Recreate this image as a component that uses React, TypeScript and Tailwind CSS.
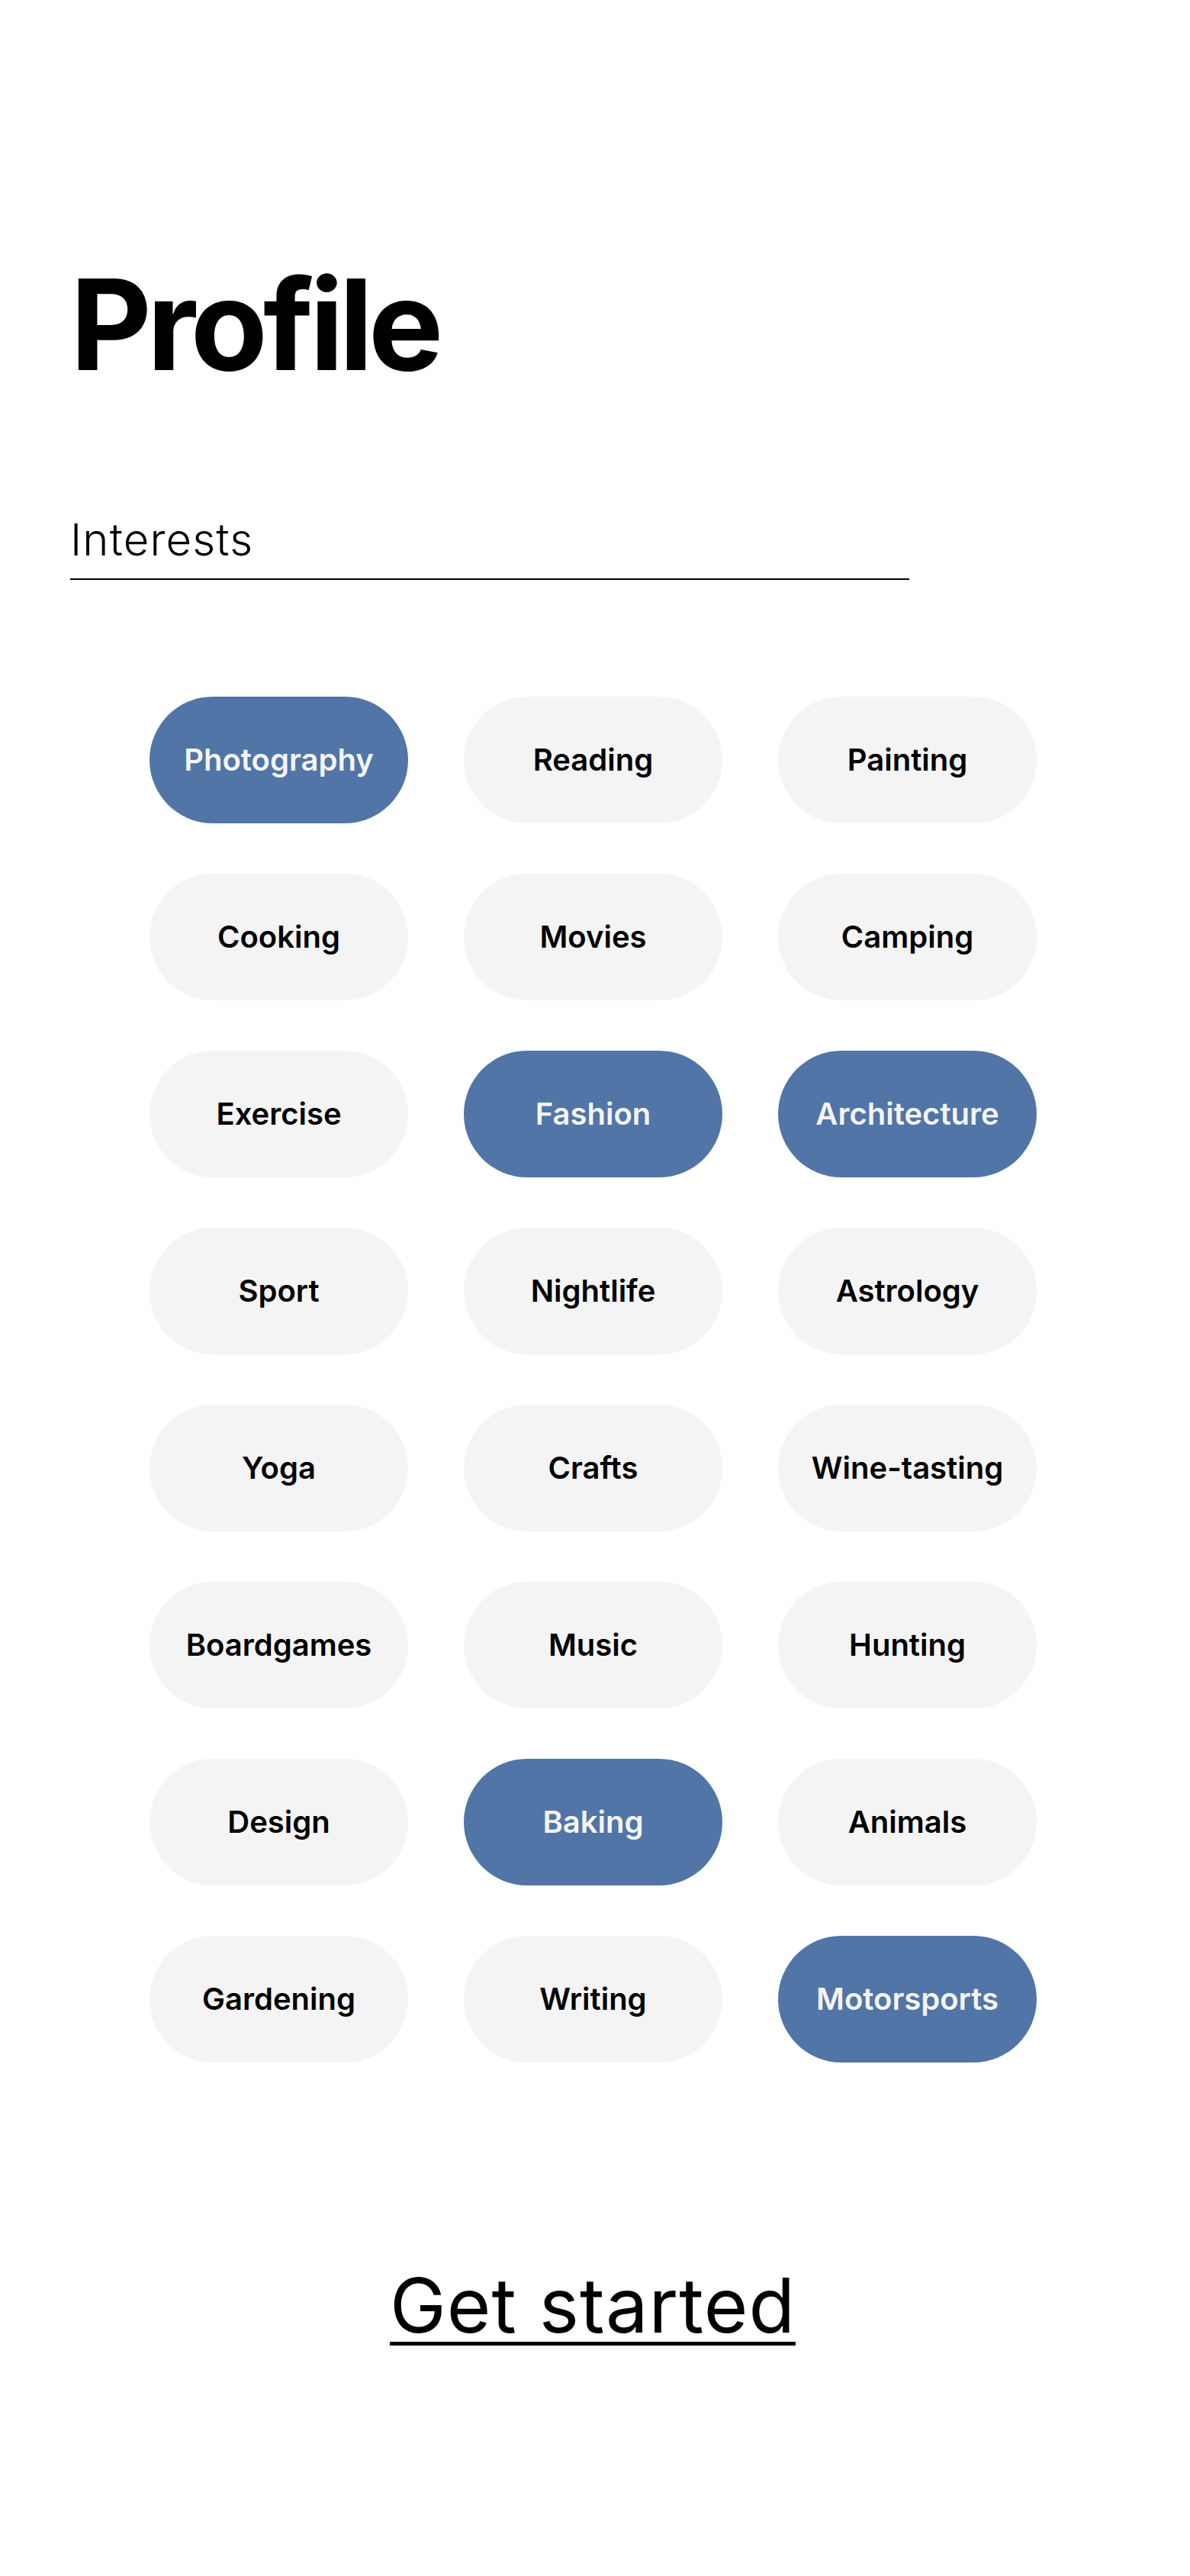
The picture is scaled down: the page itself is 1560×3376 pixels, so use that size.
import React, { useState } from 'react';

const INTERESTS = [
  'Photography', 'Reading', 'Painting',
  'Cooking', 'Movies', 'Camping',
  'Exercise', 'Fashion', 'Architecture',
  'Sport', 'Nightlife', 'Astrology',
  'Yoga', 'Crafts', 'Wine-tasting',
  'Boardgames', 'Music', 'Hunting',
  'Design', 'Baking', 'Animals',
  'Gardening', 'Writing', 'Motorsports',
];

export default function App() {
  const [selected, setSelected] = useState<string[]>([
    'Photography', 'Fashion', 'Architecture', 'Baking', 'Motorsports',
  ]);

  const toggle = (name: string) => {
    setSelected((prev) =>
      prev.includes(name) ? prev.filter((n) => n !== name) : [...prev, name]
    );
  };

  return (
    <div className="min-h-screen bg-white text-black font-['Inter','Liberation_Sans',sans-serif]">
      <div className="px-[92px] pt-[343px]">
        <h1 className="text-[165px] font-bold leading-none tracking-[-0.037em]">Profile</h1>

        <div className="mt-[170px] w-[1100px] border-b-2 border-black pb-[22px]">
          <h2 className="text-[58px] font-light leading-none tracking-[0.02em]">Interests</h2>
        </div>
      </div>

      <div className="mt-[153px] pl-[196px]">
        <div className="grid grid-cols-[repeat(3,339px)] gap-x-[73px] gap-y-[66px]">
          {INTERESTS.map((name) => {
            const on = selected.includes(name);
            return (
              <button
                key={name}
                onClick={() => toggle(name)}
                className={
                  'h-[166px] rounded-full text-[40px] font-semibold ' +
                  (on ? 'bg-[#5075a6] text-[#f5f5f5]' : 'bg-[#f4f4f4] text-black')
                }
              >
                {name}
              </button>
            );
          })}
        </div>
      </div>

      <div className="mt-[269px] flex justify-center pr-[6px]">
        <a
          href="#"
          className="text-[99px] font-normal leading-none tracking-[0.01em] underline decoration-[5px] underline-offset-[12px]"
        >
          Get started
        </a>
      </div>
    </div>
  );
}
